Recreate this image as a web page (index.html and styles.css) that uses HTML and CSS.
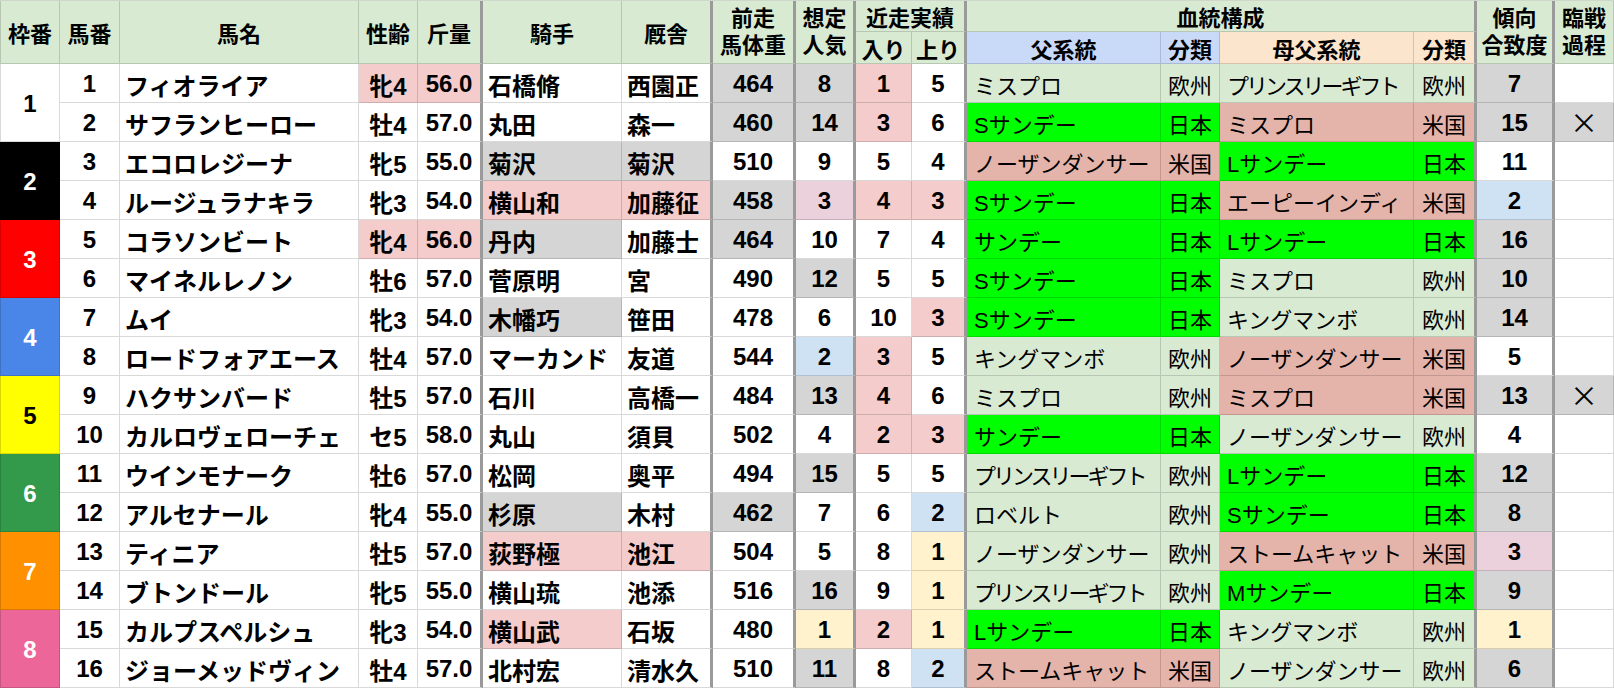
FILE: index.html
```html
<!DOCTYPE html>
<html lang="ja">
<head>
<meta charset="utf-8">
<title>出馬表</title>
<link rel="stylesheet" href="styles.css">
</head>
<body>
<div class="sheet">
  <div class="c h r2 fc">枠番</div>
  <div class="c h r2">馬番</div>
  <div class="c h r2">馬名</div>
  <div class="c h r2">性齢</div>
  <div class="c h r2 t">斤量</div>
  <div class="c h r2">騎手</div>
  <div class="c h r2 t">厩舎</div>
  <div class="c h r2 t two">前走<br>馬体重</div>
  <div class="c h r2 t two">想定<br>人気</div>
  <div class="c h s2 t">近走実績</div>
  <div class="c h s4 t">血統構成</div>
  <div class="c h r2 t two">傾向<br>合致度</div>
  <div class="c h r2 two">臨戦<br>過程</div>
  <div class="c h">入り</div>
  <div class="c h t">上り</div>
  <div class="c hb">父系統</div>
  <div class="c hb">分類</div>
  <div class="c ho">母父系統</div>
  <div class="c ho t">分類</div>

  <!-- 1 -->
  <div class="c f f1 fc">1</div>
  <div class="c">1</div><div class="c l">フィオライア</div><div class="c pk">牝4</div><div class="c t pk">56.0</div>
  <div class="c l">石橋脩</div><div class="c l t">西園正</div><div class="c t gy">464</div><div class="c t gy">8</div>
  <div class="c pk">1</div><div class="c t">5</div>
  <div class="c l n lg">ミスプロ</div><div class="c n lg">欧州</div><div class="c l n lg sq">プリンスリーギフト</div><div class="c n lg t">欧州</div>
  <div class="c t gy">7</div><div class="c"></div>
  <!-- 2 -->
  <div class="c">2</div><div class="c l">サフランヒーロー</div><div class="c">牡4</div><div class="c t">57.0</div>
  <div class="c l">丸田</div><div class="c l t">森一</div><div class="c t gy">460</div><div class="c t gy">14</div>
  <div class="c pk">3</div><div class="c t">6</div>
  <div class="c l n gn">Sサンデー</div><div class="c n gn">日本</div><div class="c l n sa">ミスプロ</div><div class="c n sa t">米国</div>
  <div class="c t gy">15</div><div class="c gy x">×</div>
  <!-- 3 -->
  <div class="c f f2 fc">2</div>
  <div class="c">3</div><div class="c l">エコロレジーナ</div><div class="c">牝5</div><div class="c t">55.0</div>
  <div class="c l gy">菊沢</div><div class="c l t gy">菊沢</div><div class="c t">510</div><div class="c t">9</div>
  <div class="c">5</div><div class="c t">4</div>
  <div class="c l n sa">ノーザンダンサー</div><div class="c n sa">米国</div><div class="c l n gn">Lサンデー</div><div class="c n gn t">日本</div>
  <div class="c t">11</div><div class="c"></div>
  <!-- 4 -->
  <div class="c">4</div><div class="c l">ルージュラナキラ</div><div class="c">牝3</div><div class="c t">54.0</div>
  <div class="c l pk">横山和</div><div class="c l t pk">加藤征</div><div class="c t gy">458</div><div class="c t mv">3</div>
  <div class="c pk">4</div><div class="c t pk">3</div>
  <div class="c l n gn">Sサンデー</div><div class="c n gn">日本</div><div class="c l n sa">エーピーインディ</div><div class="c n sa t">米国</div>
  <div class="c t bl">2</div><div class="c"></div>
  <!-- 5 -->
  <div class="c f f3 fc">3</div>
  <div class="c">5</div><div class="c l">コラソンビート</div><div class="c pk">牝4</div><div class="c t pk">56.0</div>
  <div class="c l gy">丹内</div><div class="c l t">加藤士</div><div class="c t gy">464</div><div class="c t">10</div>
  <div class="c">7</div><div class="c t">4</div>
  <div class="c l n gn">サンデー</div><div class="c n gn">日本</div><div class="c l n gn">Lサンデー</div><div class="c n gn t">日本</div>
  <div class="c t gy">16</div><div class="c"></div>
  <!-- 6 -->
  <div class="c">6</div><div class="c l">マイネルレノン</div><div class="c">牡6</div><div class="c t">57.0</div>
  <div class="c l">菅原明</div><div class="c l t">宮</div><div class="c t">490</div><div class="c t gy">12</div>
  <div class="c">5</div><div class="c t">5</div>
  <div class="c l n gn">Sサンデー</div><div class="c n gn">日本</div><div class="c l n lg">ミスプロ</div><div class="c n lg t">欧州</div>
  <div class="c t gy">10</div><div class="c"></div>
  <!-- 7 -->
  <div class="c f f4 fc">4</div>
  <div class="c">7</div><div class="c l">ムイ</div><div class="c">牝3</div><div class="c t">54.0</div>
  <div class="c l gy">木幡巧</div><div class="c l t">笹田</div><div class="c t">478</div><div class="c t">6</div>
  <div class="c">10</div><div class="c t pk">3</div>
  <div class="c l n gn">Sサンデー</div><div class="c n gn">日本</div><div class="c l n lg">キングマンボ</div><div class="c n lg t">欧州</div>
  <div class="c t gy">14</div><div class="c"></div>
  <!-- 8 -->
  <div class="c">8</div><div class="c l">ロードフォアエース</div><div class="c">牡4</div><div class="c t">57.0</div>
  <div class="c l">マーカンド</div><div class="c l t">友道</div><div class="c t">544</div><div class="c t bl">2</div>
  <div class="c pk">3</div><div class="c t">5</div>
  <div class="c l n lg">キングマンボ</div><div class="c n lg">欧州</div><div class="c l n sa">ノーザンダンサー</div><div class="c n sa t">米国</div>
  <div class="c t">5</div><div class="c"></div>
  <!-- 9 -->
  <div class="c f f5 fc">5</div>
  <div class="c">9</div><div class="c l">ハクサンバード</div><div class="c">牡5</div><div class="c t">57.0</div>
  <div class="c l">石川</div><div class="c l t">高橋一</div><div class="c t">484</div><div class="c t gy">13</div>
  <div class="c pk">4</div><div class="c t">6</div>
  <div class="c l n lg">ミスプロ</div><div class="c n lg">欧州</div><div class="c l n sa">ミスプロ</div><div class="c n sa t">米国</div>
  <div class="c t gy">13</div><div class="c gy x">×</div>
  <!-- 10 -->
  <div class="c">10</div><div class="c l">カルロヴェローチェ</div><div class="c">セ5</div><div class="c t">58.0</div>
  <div class="c l">丸山</div><div class="c l t">須貝</div><div class="c t">502</div><div class="c t">4</div>
  <div class="c pk">2</div><div class="c t pk">3</div>
  <div class="c l n gn">サンデー</div><div class="c n gn">日本</div><div class="c l n lg">ノーザンダンサー</div><div class="c n lg t">欧州</div>
  <div class="c t">4</div><div class="c"></div>
  <!-- 11 -->
  <div class="c f f6 fc">6</div>
  <div class="c">11</div><div class="c l">ウインモナーク</div><div class="c">牡6</div><div class="c t">57.0</div>
  <div class="c l">松岡</div><div class="c l t">奥平</div><div class="c t">494</div><div class="c t gy">15</div>
  <div class="c">5</div><div class="c t">5</div>
  <div class="c l n lg sq">プリンスリーギフト</div><div class="c n lg">欧州</div><div class="c l n gn">Lサンデー</div><div class="c n gn t">日本</div>
  <div class="c t gy">12</div><div class="c"></div>
  <!-- 12 -->
  <div class="c">12</div><div class="c l">アルセナール</div><div class="c">牝4</div><div class="c t">55.0</div>
  <div class="c l gy">杉原</div><div class="c l t">木村</div><div class="c t gy">462</div><div class="c t">7</div>
  <div class="c">6</div><div class="c t bl">2</div>
  <div class="c l n lg">ロベルト</div><div class="c n lg">欧州</div><div class="c l n gn">Sサンデー</div><div class="c n gn t">日本</div>
  <div class="c t gy">8</div><div class="c"></div>
  <!-- 13 -->
  <div class="c f f7 fc">7</div>
  <div class="c">13</div><div class="c l">ティニア</div><div class="c">牡5</div><div class="c t">57.0</div>
  <div class="c l pk">荻野極</div><div class="c l t pk">池江</div><div class="c t">504</div><div class="c t">5</div>
  <div class="c">8</div><div class="c t yl">1</div>
  <div class="c l n lg">ノーザンダンサー</div><div class="c n lg">欧州</div><div class="c l n sa">ストームキャット</div><div class="c n sa t">米国</div>
  <div class="c t mv">3</div><div class="c"></div>
  <!-- 14 -->
  <div class="c">14</div><div class="c l">ブトンドール</div><div class="c">牝5</div><div class="c t">55.0</div>
  <div class="c l">横山琉</div><div class="c l t">池添</div><div class="c t">516</div><div class="c t gy">16</div>
  <div class="c">9</div><div class="c t yl">1</div>
  <div class="c l n lg sq">プリンスリーギフト</div><div class="c n lg">欧州</div><div class="c l n gn">Mサンデー</div><div class="c n gn t">日本</div>
  <div class="c t gy">9</div><div class="c"></div>
  <!-- 15 -->
  <div class="c f f8 fc">8</div>
  <div class="c">15</div><div class="c l">カルプスペルシュ</div><div class="c">牝3</div><div class="c t">54.0</div>
  <div class="c l pk">横山武</div><div class="c l t">石坂</div><div class="c t">480</div><div class="c t yl">1</div>
  <div class="c pk">2</div><div class="c t yl">1</div>
  <div class="c l n gn">Lサンデー</div><div class="c n gn">日本</div><div class="c l n lg">キングマンボ</div><div class="c n lg t">欧州</div>
  <div class="c t yl">1</div><div class="c"></div>
  <!-- 16 -->
  <div class="c">16</div><div class="c l">ジョーメッドヴィン</div><div class="c">牡4</div><div class="c t">57.0</div>
  <div class="c l">北村宏</div><div class="c l t">清水久</div><div class="c t">510</div><div class="c t gy">11</div>
  <div class="c">8</div><div class="c t bl">2</div>
  <div class="c l n sa">ストームキャット</div><div class="c n sa">米国</div><div class="c l n lg">ノーザンダンサー</div><div class="c n lg t">欧州</div>
  <div class="c t gy">6</div><div class="c"></div>
</div>
</body>
</html>
```

FILE: styles.css
```css
html, body {
  margin: 0;
  padding: 0;
  background: #ffffff;
}

body {
  font-family: "Liberation Sans", "Noto Sans CJK JP", sans-serif;
  color: #000;
}

.sheet {
  display: grid;
  grid-template-columns: 60px 60px 239px 59px 65px 139px 91px 83px 60px 56px 55px 194px 59px 194px 63px 78px 59px;
  grid-template-rows: 31px 32px repeat(16, 39px);
  border-top: 1px solid #cfd6cc;
  width: 1614px;
}

.c {
  box-sizing: border-box;
  display: flex;
  align-items: center;
  justify-content: center;
  border-right: 1px solid rgba(0, 0, 0, 0.15);
  border-bottom: 1px solid rgba(0, 0, 0, 0.15);
  font-size: 24px;
  font-weight: bold;
  white-space: nowrap;
  overflow: hidden;
  padding-top: 2px;
  background-clip: border-box;
}

.fc { border-left: 1px solid rgba(0, 0, 0, 0.15); }

.l {
  justify-content: flex-start;
  padding-left: 5px;
}

.t { border-right: 3px solid #9a9a9a; }

.n {
  font-weight: normal;
  font-size: 22px;
}
.n.l { padding-left: 7px; }
.sq { letter-spacing: -3px; }

.x {
  font-weight: normal;
  font-size: 28px;
  line-height: 1;
  padding-top: 0;
  font-family: "Noto Sans CJK JP", sans-serif;
}

/* header */
.h, .hb, .ho {
  font-size: 22px;
  font-weight: bold;
  padding-top: 0;
}
.h { background: #d9ead3; }
.hb { background: #c9daf8; }
.ho { background: #fce5cd; }
.r2 { grid-row: span 2; }
.s2 { grid-column: span 2; }
.s4 { grid-column: span 4; }
.two {
  text-align: center;
  line-height: 27px;
}

/* cell fills */
.pk { background: #f4cccc; }
.gy { background: #d5d5d5; }
.bl { background: #cfe2f3; }
.yl { background: #fff2cc; }
.mv { background: #ead1dc; }
.lg { background: #d9ead3; }
.gn { background: #00ff00; }
.sa { background: #e4b3aa; }

/* frame numbers */
.f { grid-row: span 2; }
.f1 { background: #ffffff; color: #000; }
.f2 { background: #000000; color: #fff; }
.f3 { background: #ff0000; color: #fff; }
.f4 { background: #4a86e8; color: #fff; }
.f5 { background: #ffff00; color: #000; }
.f6 { background: #329a4a; color: #fff; }
.f7 { background: #ff9000; color: #fff; }
.f8 { background: #ec6699; color: #fff; }
```
